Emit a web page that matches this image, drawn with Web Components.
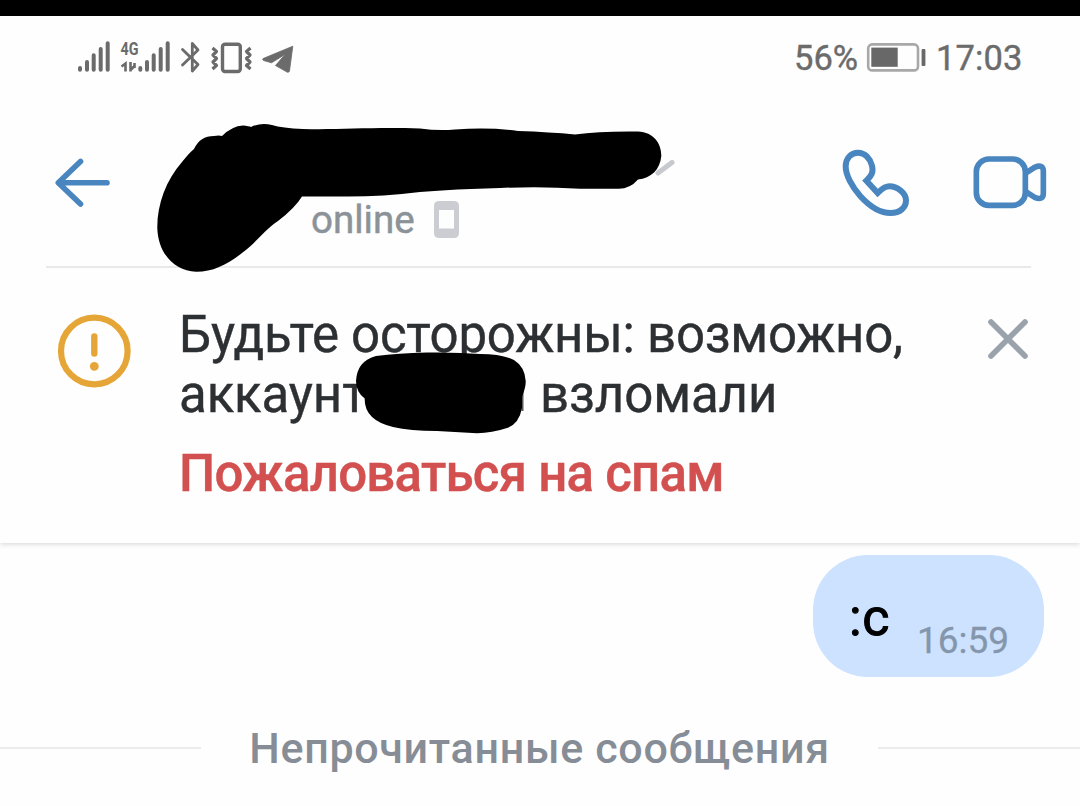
<!DOCTYPE html>
<html lang="ru">
<head>
<meta charset="utf-8">
<title>Чат</title>
<style>
    body{
        margin: 0;
        width: 1080px;
        height: 806px;
        overflow: hidden;
        background: #fefefe;
        font-family: Roboto, "Noto Sans", sans-serif;
    }
</style>
</head>
<body>
<chat-screen>
    <status-bar level="56%" time="17:03"></status-bar>
    <chat-header>online</chat-header>
    <warning-banner>
        <span slot="title">Будьте осторожны: возможно,</span>
        <span slot="start">аккаунт</span>
        <span slot="end">взломали</span>
        <span slot="action">Пожаловаться на спам</span>
    </warning-banner>
    <message-bubble time="16:59">:c</message-bubble>
    <unread-divider>Непрочитанные сообщения</unread-divider>
</chat-screen>

<script>
class ChatScreen extends HTMLElement {
    constructor(){
        super();
        this.attachShadow({mode: "open"});
        this.shadowRoot.innerHTML = `
            <style>
                :host{
                    display: flex;
                    flex-direction: column;
                    position: relative;
                    height: 806px;
                    border-top: 16px solid black;
                    box-sizing: border-box;
                }
            </style>
            <slot></slot>
            <marker-strokes></marker-strokes>
        `;
    }
}

class StatusBar extends HTMLElement {
    constructor(){
        super();
        this.attachShadow({mode: "open"});
    }

    connectedCallback(){
        this.shadowRoot.innerHTML = `
            <style>
                :host{
                    display: flex;
                    align-items: center;
                    height: 84px;
                    padding-left: 70px;
                    color: #6b6b6b;
                    font-size: 34.5px;
                    line-height: 40px;
                    white-space: nowrap;
                    -webkit-text-stroke: 0.4px;
                }

                svg{
                    display: block;
                    flex: none;
                    -webkit-text-stroke: 0;
                }

                .level{
                    margin-left: auto;
                    width: 71px;
                }

                .time{
                    width: 144px;
                    margin-left: 9px;
                    letter-spacing: 0.1px;
                }
            </style>
            <svg width="230" height="84" viewBox="70 16 230 84" fill="none" stroke="#6b6b6b">
                <g stroke-width="4" stroke-linecap="round">
                    <path d="M80 68v1.8M87 62v7.8M93.7 55.3v14.5M100.7 49v20.8M107.7 43.3v26.5"/>
                    <path d="M140.3 68v1.8M147 62v7.8M153.7 55.3v14.5M160.7 49v20.8M167.7 43.3v26.5"/>
                </g>
                <text x="120.5" y="55" textLength="18" lengthAdjust="spacingAndGlyphs" font-size="18.5" font-weight="700" fill="#6b6b6b" stroke="none">4G</text>
                <path d="M121.5 66.5L125.5 63.5V71.5M130.5 62V71.5M130.5 70L135 65.5M134.5 63V68" stroke-width="2.6"/>
                <path d="M182.5 49.5L198 64.5L192.3 71V43.5L198 50L182.5 65" stroke-width="2.8" stroke-linejoin="round" stroke-linecap="round"/>
                <rect x="222.5" y="44.3" width="17.8" height="27.2" rx="2.5" stroke-width="3.4"/>
                <path d="M212.5 48l4 3.5l-3.5 3.5l3.5 3.5l-3.5 3.5l3.5 3.5l-4 3.5M250.5 48l-4 3.5l3.5 3.5l-3.5 3.5l3.5 3.5l-3.5 3.5l4 3.5" stroke-width="3.2" stroke-linejoin="round"/>
                <path d="M292.8 46.2L263 58.6Q262 59.6 263.5 60.5L271.5 62.8L285 54.5L275.5 65.5L287.5 72.3Q289 72.5 289.5 71Z" fill="#6b6b6b" stroke-width=".8"/>
            </svg>
            <span class="level">${this.getAttribute("level")}</span>
            <svg width="62" height="84" viewBox="865 16 62 84">
                <rect x="868.2" y="44.4" width="49.8" height="26" rx="4" fill="none" stroke="#a8a8a8" stroke-width="2.6"/>
                <rect x="871.3" y="47.6" width="26.4" height="19.2" fill="#686868"/>
                <rect x="921.6" y="49" width="3.8" height="17" rx="1" fill="#686868"/>
            </svg>
            <span class="time">${this.getAttribute("time")}</span>
        `;
    }
}

class ChatHeader extends HTMLElement {
    constructor(){
        super();
        this.attachShadow({mode: "open"});
        this.shadowRoot.innerHTML = `
            <style>
                :host{
                    display: flex;
                    align-items: center;
                    height: 168px;
                    margin: 0 49px 0 46px;
                    box-sizing: border-box;
                    border-bottom: 2px solid #e9e9eb;
                }

                svg{
                    display: block;
                    flex: none;
                }

                .presence{
                    display: flex;
                    align-items: center;
                    gap: 19px;
                    margin-left: 201px;
                    padding-top: 74px;
                    color: #8b9298;
                    font-size: 38.5px;
                    line-height: 46px;
                    -webkit-text-stroke: 0.5px;
                }

                .actions{
                    display: flex;
                    align-items: center;
                    gap: 60px;
                    margin-left: auto;
                    margin-right: -17px;
                }

                .video{
                    margin-bottom: 3px;
                }
            </style>
            <svg width="64" height="54" viewBox="46 156 64 54" fill="none" stroke="#4985be" stroke-width="5.6" stroke-linecap="round" stroke-linejoin="round">
                <path d="M80.5 161.5L58.3 182.7L80.5 204M59 182.7H107"/>
            </svg>
            <div class="presence">
                <slot></slot>
                <svg width="25" height="38" viewBox="0 0 25 38">
                    <path fill="#cccdd2" fill-rule="evenodd" d="M5 0H20Q25 0 25 5V32Q25 37 20 37H5Q0 37 0 32V5Q0 0 5 0ZM5 9V27.5H20V9Z"/>
                </svg>
            </div>
            <div class="actions">
                <svg width="72" height="72" viewBox="60 50 216 216" fill="none" stroke="#4985be" stroke-width="18" stroke-linejoin="miter">
                    <path d="M139 151C154 137 161 127 156 106C150 84 135 67 114 67C92 67 77 85 77 108C77 160 150 248 212 248C240 248 258 232 258 210C258 188 232 168 208 168C192 168 184 178 173 188Z"/>
                </svg>
                <svg class="video" width="76" height="57" viewBox="455 70 228 171" fill="none" stroke="#4985be" stroke-width="17">
                    <rect x="468" y="88" width="147" height="139" rx="38"/>
                    <path d="M615 131L643 113Q669 102 669 125V190Q669 214 643 203L615 185"/>
                </svg>
            </div>
        `;
    }
}

class WarningBanner extends HTMLElement {
    constructor(){
        super();
        this.attachShadow({mode: "open"});
        this.shadowRoot.innerHTML = `
            <style>
                :host{
                    display: flex;
                    align-items: flex-start;
                    height: 275px;
                    padding: 36px 50px 0 56px;
                    box-sizing: border-box;
                    box-shadow: 0 1px 5px rgba(0, 0, 0, 0.17);
                    clip-path: inset(0 0 -8px 0);
                    background: #fefefe;
                    color: #2d3033;
                    font-size: 51px;
                    line-height: 60px;
                    white-space: nowrap;
                }

                svg{
                    display: block;
                    flex: none;
                }

                .alert{
                    margin-top: 9px;
                }

                .text{
                    margin: 1px 0 0 46px;
                    -webkit-text-stroke: 0.4px;
                }

                .title{
                    letter-spacing: -0.25px;
                }

                .line{
                    display: flex;
                    letter-spacing: -0.1px;
                }

                .start{
                    width: 361px;
                }

                .action{
                    margin-top: 19px;
                    color: #d2504f;
                    font-weight: 500;
                    letter-spacing: -0.75px;
                }

                .close{
                    margin-left: auto;
                    margin-top: 13px;
                }
            </style>
            <svg class="alert" width="77" height="77" viewBox="0 0 77 77">
                <circle cx="38.3" cy="38" r="33.3" fill="none" stroke="#e5a637" stroke-width="6.2"/>
                <path d="M38.3 23.5V40.5" stroke="#e5a637" stroke-width="6.4" stroke-linecap="round"/>
                <circle cx="38.3" cy="53.3" r="4.4" fill="#e5a637"/>
            </svg>
            <div class="text">
                <div class="title"><slot name="title"></slot></div>
                <div class="line">
                    <div class="start"><slot name="start"></slot></div>
                    <div class="end"><slot name="end"></slot></div>
                </div>
                <div class="action"><slot name="action"></slot></div>
            </div>
            <svg class="close" width="44" height="44" viewBox="0 0 44 44" stroke="#9aa2ac" stroke-width="5.6" stroke-linecap="round">
                <path d="M5 5L39 39M39 5L5 39"/>
            </svg>
        `;
    }
}

class MessageBubble extends HTMLElement {
    constructor(){
        super();
        this.attachShadow({mode: "open"});
    }

    connectedCallback(){
        this.shadowRoot.innerHTML = `
            <style>
                :host{
                    display: flex;
                    align-self: flex-end;
                    width: 231px;
                    height: 122px;
                    margin: 12px 36px 0 0;
                    padding-left: 36px;
                    box-sizing: border-box;
                    border-radius: 55px;
                    background: #cce2ff;
                    color: black;
                    font-size: 52px;
                    line-height: 60px;
                }

                .text{
                    width: 68px;
                    padding-top: 33px;
                    letter-spacing: 0.6px;
                    -webkit-text-stroke: 1px;
                }

                .time{
                    padding-top: 56px;
                    color: #8596ac;
                    font-size: 37px;
                    -webkit-text-stroke: 0.3px;
                }
            </style>
            <div class="text"><slot></slot></div>
            <div class="time">${this.getAttribute("time")}</div>
        `;
    }
}

class UnreadDivider extends HTMLElement {
    constructor(){
        super();
        this.attachShadow({mode: "open"});
        this.shadowRoot.innerHTML = `
            <style>
                :host{
                    display: grid;
                    grid-template-columns: 201px 677px 202px;
                    align-items: center;
                    height: 50px;
                    margin-top: 46px;
                    color: #868d96;
                    font-size: 43px;
                    font-weight: 500;
                    line-height: 50px;
                    letter-spacing: 0.68px;
                    text-align: center;
                    white-space: nowrap;
                }

                .line{
                    height: 2px;
                    background: #ebecee;
                }
            </style>
            <div class="line"></div>
            <div><slot></slot></div>
            <div class="line"></div>
        `;
    }
}

// black marker drawn over the avatar and the names
class MarkerStrokes extends HTMLElement {
    constructor(){
        super();
        this.attachShadow({mode: "open"});
        this.shadowRoot.innerHTML = `
            <style>
                :host{
                    display: block;
                    position: absolute;
                    left: 0;
                    top: -16px;
                }

                svg{
                    display: block;
                }
            </style>
            <svg width="1080" height="806" viewBox="0 0 1080 806">
                <path d="M658 173L672 162.5" stroke="#c6c9ce" stroke-width="5" stroke-linecap="round"/>
                <path d="M522.5 384V411" stroke="#55585b" stroke-width="2"/>
                <path d="M157.3 228C157 205 166 180 182 162Q190 152 194 149Q200 136 214 136Q219 135 222 136Q232 126 243 125.5Q249 126 251 127Q261 122 272 125Q282 128 303 129C340 130 370 127 420 128.5Q438 131 455 129.5Q490 127 518 131Q550 132 575 134.5Q600 131 638 131.5C654 132 661.5 144 661.3 156C660 170 651 178 638 179.5Q630 189 618 188.7H580Q540 186 500 188Q455 189 420 192Q380 197 340 196.5H302Q295 208 278 221C263 231 256 243 242 253C227 265 212 272 196 271.8C175 271 158 254 157.3 228Z"/>
                <path d="M356 381Q357 361 376 356Q398 353 427 352.5Q457 352 480 354Q502 354 514 360Q525 367 525.7 381Q526 387 522 397V408Q519 424 507 428Q492 433 477 433.3L437 431Q410 431 393 427Q364 420 364.7 398.5Q356 392 356 381Z"/>
            </svg>
        `;
    }
}

customElements.define("status-bar", StatusBar);
customElements.define("chat-header", ChatHeader);
customElements.define("warning-banner", WarningBanner);
customElements.define("message-bubble", MessageBubble);
customElements.define("unread-divider", UnreadDivider);
customElements.define("marker-strokes", MarkerStrokes);
customElements.define("chat-screen", ChatScreen);
</script>
</body>
</html>
